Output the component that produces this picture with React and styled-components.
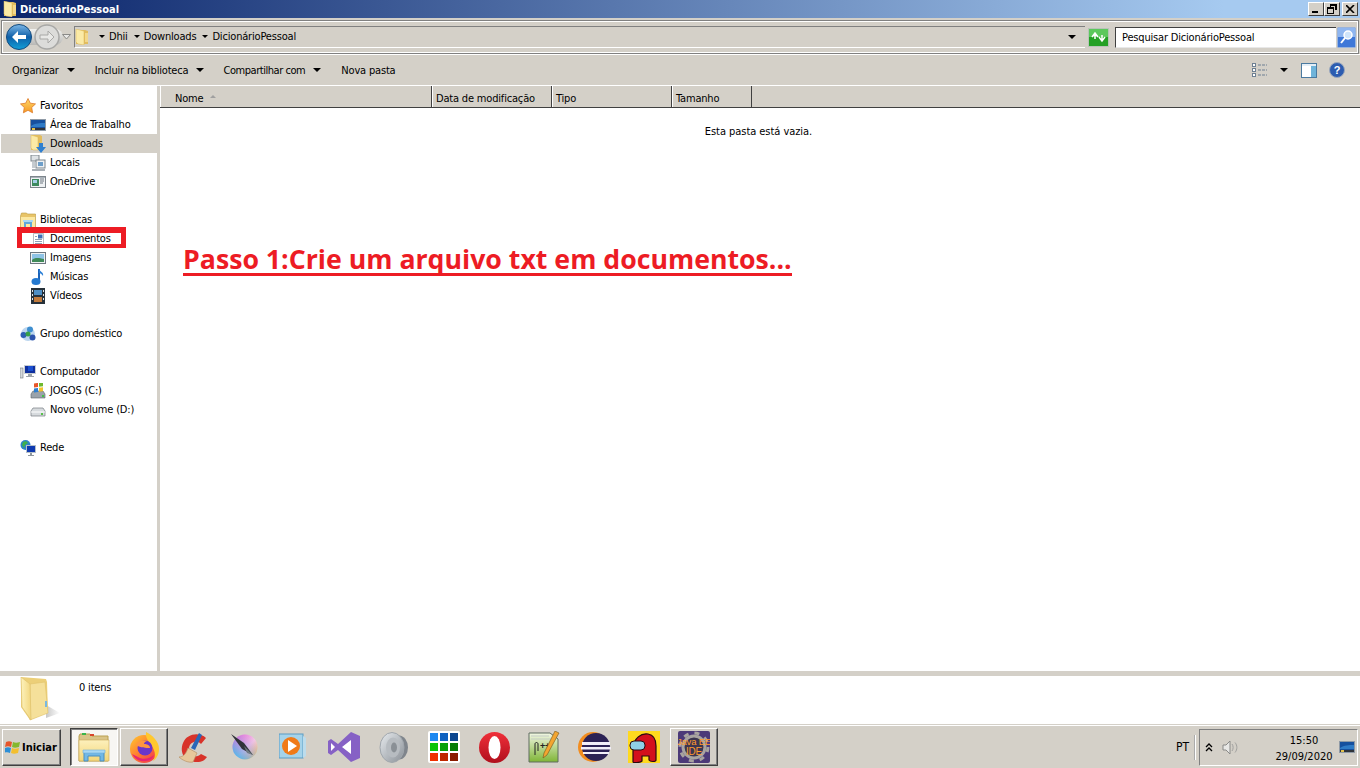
import React from 'react'
import styled, { createGlobalStyle } from 'styled-components'

const GlobalStyle = createGlobalStyle`
  html, body {
    margin: 0;
    padding: 0;
    background: #d4d0c8;
    overflow: hidden;
  }
  * {
    box-sizing: border-box;
  }
`

const Window = styled.div`
  position: relative;
  display: flex;
  flex-direction: column;
  width: 1360px;
  height: 768px;
  background: #d4d0c8;
  color: #000;
  font-family: 'DejaVu Sans', 'Liberation Sans', sans-serif;
  font-stretch: condensed;
  font-size: 11px;
  letter-spacing: -0.18px;
`

const TitleBar = styled.div`
  display: flex;
  align-items: center;
  height: 18px;
  padding: 0 2px 0 3px;
  background: linear-gradient(90deg, #0a246a 0%, #a6caf0 90%, #a6caf0 100%);
  color: #fff;
  font-weight: bold;
  letter-spacing: 0;
`

const TitleText = styled.span`
  margin-left: 1px;
  flex: 1;
`

const CaptionButton = styled.div`
  display: flex;
  align-items: center;
  justify-content: center;
  width: 16px;
  height: 14px;
  margin-left: ${p => (p.$gap ? '2px' : '0')};
  background: #d4d0c8;
  border: 1px solid;
  border-color: #fff #404040 #404040 #fff;
`

const AddressBar = styled.div`
  display: flex;
  align-items: center;
  height: 34px;
  margin: 2px 1px 0;
  padding: 0 2px 0 4px;
  border: 1px solid #808080;
  box-shadow: inset 0 0 0 1px #fff;
`

const NavGroup = styled.div`
  position: relative;
  display: flex;
  align-items: center;
  gap: 2px;
  width: 68px;
  height: 26px;
  flex-shrink: 0;

  &::before {
    content: '';
    position: absolute;
    left: 12px;
    top: 5px;
    width: 45px;
    height: 16px;
    border-radius: 8px;
    background: linear-gradient(#f2f2f0, #b8b8b6);
  }

  svg {
    position: relative;
  }
`

const AddressBox = styled.div`
  display: flex;
  align-items: center;
  flex: 1;
  height: 22px;
  padding-bottom: 1px;
  border-top: 1px solid #808080;
  border-left: 1px solid #808080;
  border-bottom: 1px solid #fff;
`

const Crumb = styled.span`
  display: inline-flex;
  align-items: center;
  gap: 4px;
  margin-left: ${p => (p.$first ? '8px' : '6px')};
`

const ArrowDown = styled.i`
  display: inline-block;
  width: 0;
  height: 0;
  border-style: solid;
  border-width: ${p => (p.$big ? '4px 4px 0' : '3px 3px 0')};
  border-color: #000 transparent transparent;
`

const BoxArrow = styled(ArrowDown)`
  margin-left: auto;
  margin-right: 9px;
`

const RefreshButton = styled.div`
  display: flex;
  margin: 0 6px 0 3px;
`

const SearchBox = styled.div`
  display: flex;
  align-items: center;
  width: 221px;
  height: 21px;
  padding-left: 6px;
  background: #fff;
  border-top: 1px solid #404040;
  border-left: 1px solid #404040;
  border-bottom: 1px solid #e8e8e8;
`

const SearchButton = styled.div`
  display: flex;
  margin-left: 1px;
`

const Toolbar = styled.div`
  display: flex;
  align-items: center;
  height: 31px;
  padding: 0 15px 0 12px;
  border-top: 1px solid #fff;
`

const ToolItem = styled.span`
  display: inline-flex;
  align-items: center;
  gap: 8px;
  margin-right: ${p => p.$gap || 20}px;
  letter-spacing: ${p => (p.$tight ? '-0.45px' : 'inherit')};
`

const ToolIcons = styled.div`
  display: flex;
  align-items: center;
  margin-left: auto;
`

const ToolIcon = styled.span`
  display: flex;
  align-items: center;
  margin-left: ${p => p.$gap || 0}px;
`

const Main = styled.div`
  display: flex;
  flex: 1;
  min-height: 0;
  border-top: 1px solid #fff;
`

const Sidebar = styled.nav`
  width: 157px;
  flex-shrink: 0;
  padding-top: 10px;
  background: #fff;
`

const Group = styled.div`
  margin-bottom: 19px;
`

const Row = styled.div`
  display: flex;
  align-items: center;
  height: 19px;
  margin-left: 1px;
  padding-left: ${p => (p.$child ? '29px' : '19px')};
  gap: 4px;
  background: ${p => (p.$active ? '#d4d0c8' : 'transparent')};
`

const Content = styled.div`
  display: flex;
  flex-direction: column;
  flex: 1;
  margin-left: 3px;
  background: #fff;
`

const HeaderRow = styled.div`
  display: flex;
  height: 22px;
  flex-shrink: 0;
  background: #d4d0c8;
  border-bottom: 1px solid #404040;
`

const HeaderCell = styled.div`
  display: flex;
  align-items: center;
  gap: 7px;
  width: ${p => p.$w}px;
  padding-top: 3px;
  padding-left: ${p => p.$pad || 4}px;
  border-right: 1px solid #404040;
  box-shadow: inset 1px 0 0 #fff;
`

const SortArrow = styled.i`
  width: 0;
  height: 0;
  margin-top: -3px;
  border-style: solid;
  border-width: 0 3px 3px;
  border-color: transparent transparent #a0a0a0;
`

const Empty = styled.div`
  margin-top: 17px;
  margin-right: 3px;
  text-align: center;
  line-height: 14px;
  letter-spacing: -0.05px;
`

const StatusBar = styled.div`
  display: flex;
  height: 48px;
  flex-shrink: 0;
  margin-top: 5px;
  padding: 1px 0 0 20px;
  background: #fff;
`

const StatusText = styled.span`
  margin: 4px 0 0 17px;
`

const Taskbar = styled.div`
  display: flex;
  align-items: center;
  height: 43px;
  flex-shrink: 0;
  margin-top: 1px;
  padding-left: 2px;
  border-top: 1px solid #fff;
`

const StartButton = styled.div`
  display: flex;
  align-items: center;
  gap: 1px;
  width: 59px;
  height: 37px;
  margin-right: 8px;
  padding-left: 2px;
  font-family: 'DejaVu Sans', 'Liberation Sans', sans-serif;
  font-weight: bold;
  letter-spacing: 0;
  border: 1px solid;
  border-color: #fff #404040 #404040 #fff;
  box-shadow: inset -1px -1px 0 #808080;
`

const TaskButton = styled.div`
  display: flex;
  align-items: center;
  justify-content: center;
  width: 50px;
  height: 38px;
  flex-shrink: 0;
`

const RaisedTask = styled(TaskButton)`
  width: 48px;
  margin: 0 1px;
  border: 1px solid;
  border-color: ${p =>
    p.$pressed ? '#404040 #fff #fff #404040' : '#fff #404040 #404040 #fff'};
  background: ${p => (p.$pressed ? '#f7f6f3' : 'transparent')};
  box-shadow: ${p =>
    p.$pressed ? 'inset 1px 1px 0 #808080' : 'inset -1px -1px 0 #808080'};
`

const Tray = styled.div`
  display: flex;
  align-items: center;
  margin-left: auto;
`

const Lang = styled.span`
  font-size: 12px;
  letter-spacing: 0;
  padding-right: 5px;
  margin-right: 2px;
  height: 25px;
  line-height: 25px;
  border-right: 2px groove #fff;
`

const TrayBox = styled.div`
  display: flex;
  align-items: center;
  width: 159px;
  height: 37px;
  margin: 0 2px 0 1px;
  padding-left: 5px;
  border: 1px solid;
  border-color: #808080 #fff #fff #808080;
`

const TraySound = styled.span`
  display: flex;
  margin-left: 9px;
`

const Clock = styled.div`
  width: 66px;
  margin: 0 2px 0 32px;
  padding-top: 3px;
  text-align: center;
  line-height: 16px;
  letter-spacing: 0;
`

const Annotation = styled.div`
  position: absolute;
  left: 183px;
  top: 240px;
  height: 36px;
  color: #ed1c24;
  font-family: 'Open Sans', 'Liberation Sans', sans-serif;
  font-stretch: normal;
  font-weight: 700;
  font-size: 26.7px;
  line-height: 37px;
  letter-spacing: 0;
  white-space: nowrap;
  border-bottom: 3px solid #ed1c24;
`

const Highlight = styled.div`
  position: absolute;
  left: 17px;
  top: 227px;
  width: 109px;
  height: 21px;
  border: solid #ed1c24;
  border-width: 6px 5px 4px;
`

const Folder = ({ size = 16 }) => (
  <svg width={size} height={size} viewBox="0 0 16 16">
    <path d="M1 1h9l3 1v13H1z" fill="#e2bd5f" />
    <path d="M1 0l8 2v14l-6-1-2-2z" fill="#fbeaa6" stroke="#d9b557" strokeWidth=".5" />
    <path d="M10 4h3v9h-3z" fill="#f3d78a" />
  </svg>
)

const FolderDown = () => (
  <svg width="16" height="18" viewBox="0 0 16 18">
    <path d="M1 0h9l2 1v14H1z" fill="#e2bd5f" />
    <path d="M1 0l7 2v13l-5 0-2-2z" fill="#fbeaa6" stroke="#d9b557" strokeWidth=".5" />
    <path d="M9 8h4v4h3l-5 6-5-6h3z" fill="#2f7fd0" />
  </svg>
)

const Star = () => (
  <svg width="16" height="16" viewBox="0 0 16 16">
    <defs>
      <linearGradient id="st" x1="0" x2="0" y1="0" y2="1">
        <stop offset="0" stopColor="#ffd76a" />
        <stop offset="1" stopColor="#f59a23" />
      </linearGradient>
    </defs>
    <path d="M8 .500l2.300 4.700 5.200.7-3.800 3.600.9 5.300L8 12.300l-4.600 2.500.9-5.300L.500 5.900l5.200-.7z" fill="url(#st)" stroke="#dd7a28" strokeWidth=".8" />
  </svg>
)

const Desktop = () => (
  <svg width="16" height="16" viewBox="0 0 16 16">
    <rect x="0" y="2" width="16" height="12" fill="#8f9aa6" />
    <rect x="1" y="3" width="14" height="10" fill="#16509e" />
    <path d="M1 9c4-3 9-3 14-3v4H1z" fill="#2f7bc6" />
    <rect x="1" y="11" width="14" height="2" fill="#30343a" />
    <rect x="2" y="11" width="3" height="2" fill="#e2c04a" />
  </svg>
)

const Locais = () => (
  <svg width="16" height="16" viewBox="0 0 16 16">
    <rect x="1" y="0" width="8" height="6" fill="#dfe3e6" stroke="#7d858c" />
    <rect x="6" y="5" width="9" height="8" fill="#eef1f3" stroke="#7d858c" />
    <rect x="8" y="7" width="5" height="4" fill="#6d9ec9" />
    <path d="M2 14h13v2H2z" fill="#a9b0b6" />
    <path d="M2 7h3v6H2z" fill="#c5cbd0" />
  </svg>
)

const WindowIcon = () => (
  <svg width="16" height="16" viewBox="0 0 16 16">
    <rect x=".5" y="2.500" width="15" height="11" fill="#eef1f3" stroke="#7d858c" />
    <rect x="2" y="5" width="7" height="7" fill="#3d8a5e" />
    <path d="M3 6h4v3H3z" fill="#a5cfe8" />
    <path d="M10 5h4M10 7h4M10 9h3" stroke="#6d7780" />
    <path d="M1 3h14v1H1z" fill="#aab2b9" />
  </svg>
)

const Library = () => (
  <svg width="16" height="16" viewBox="0 0 16 16">
    <path d="M.5 4l1-3h5l1 1h8v13H.5z" fill="#e8c468" stroke="#b99a45" strokeWidth=".6" />
    <path d="M1 5h14v10H1z" fill="#fbe8a2" />
    <path d="M4 15v-5h8v5h-2v-3H6v3z" fill="#5fa7d9" />
    <path d="M3 8h10v2H3z" fill="#a9d8f4" />
  </svg>
)

const Doc = () => (
  <svg width="16" height="16" viewBox="0 0 16 16">
    <path d="M3.500 2.500h10v12h-10z" fill="#fff" stroke="#b7bdc4" />
    <path d="M8 3.500h4.500v4H8z" fill="#3e6fb5" />
    <path d="M5 5.500h2M5 8.500h7M5 10.500h7M5 12.500h7" stroke="#8ea0b5" />
  </svg>
)

const Picture = () => (
  <svg width="16" height="16" viewBox="0 0 16 16">
    <rect x=".5" y="2.500" width="15" height="11" fill="#eef1f3" stroke="#6d7780" />
    <rect x="2" y="4" width="12" height="8" fill="#8ec3e6" />
    <path d="M2 10c3-3 7-2 12-1v3H2z" fill="#3f8a58" />
  </svg>
)

const Note = () => (
  <svg width="16" height="18" viewBox="0 0 16 18">
    <path d="M9 1v11.500" stroke="#1c63b8" strokeWidth="2" />
    <ellipse cx="6" cy="13.500" rx="4.500" ry="3.500" fill="#2479d0" />
    <path d="M9 1c1 3 5 3 4 7-1-2-3-3-4-3z" fill="#2a7fd6" />
  </svg>
)

const Film = () => (
  <svg width="16" height="16" viewBox="0 0 16 16">
    <rect x="1" y="0" width="14" height="16" fill="#26313a" />
    <rect x="4" y="2" width="8" height="5" fill="#4d8ec4" />
    <rect x="4" y="9" width="8" height="5" fill="#c07a3c" />
    <path d="M2 2h1v2H2zM2 6h1v2H2zM2 10h1v2H2zM13 2h1v2h-1zM13 6h1v2h-1zM13 10h1v2h-1z" fill="#dfe6ea" />
  </svg>
)

const Homegroup = () => (
  <svg width="16" height="16" viewBox="0 0 16 16">
    <circle cx="8" cy="8" r="7" fill="#bcd6ef" />
    <circle cx="3.500" cy="9" r="3" fill="#2c5fb3" />
    <circle cx="10" cy="3.500" r="3" fill="#3f8fd0" />
    <circle cx="12.500" cy="11.500" r="3" fill="#2d55ad" />
    <circle cx="8" cy="8" r="2.500" fill="#35a04a" />
  </svg>
)

const Computer = () => (
  <svg width="16" height="16" viewBox="0 0 16 16">
    <rect x="0" y="4" width="3" height="10" fill="#d5d9dc" stroke="#70777d" strokeWidth=".6" />
    <rect x="4" y="1" width="12" height="9" fill="#c8ced3" />
    <rect x="5" y="2" width="10" height="7" fill="#0e2f9e" />
    <path d="M8 2h5v5H8z" fill="#1a4fd0" />
    <path d="M8 10h4v2h2v1H6v-1h2z" fill="#9ca3a9" />
  </svg>
)

const DriveC = () => (
  <svg width="16" height="16" viewBox="0 0 16 16">
    <path d="M1 11l2-3h10l2 3v4H1z" fill="#9aa3aa" stroke="#5c646a" strokeWidth=".6" />
    <rect x="12" y="12" width="2" height="2" fill="#45c04a" />
    <rect x="4" y="1" width="4" height="4" fill="#e8562a" transform="skewY(-8)" />
    <rect x="9" y="1" width="4" height="4" fill="#6fb92f" transform="skewY(-8)" />
    <rect x="4" y="6" width="4" height="4" fill="#2f80d0" transform="skewY(-8)" />
    <rect x="9" y="6" width="4" height="4" fill="#f2c12e" transform="skewY(-8)" />
  </svg>
)

const DriveD = () => (
  <svg width="16" height="16" viewBox="0 0 16 16">
    <path d="M1 9l2-3h10l2 3v5H1z" fill="#d7dbde" stroke="#767d83" strokeWidth=".7" />
    <path d="M1 10h14" stroke="#fff" />
    <rect x="11" y="11" width="2" height="2" fill="#58c04a" />
  </svg>
)

const Network = () => (
  <svg width="16" height="16" viewBox="0 0 16 16">
    <circle cx="5.500" cy="5" r="5" fill="#2c82c9" />
    <path d="M3 2l3-1 2 2-3 2-1 3-2-3z" fill="#3fb04a" />
    <rect x="6" y="5" width="10" height="8" fill="#b6c0c8" />
    <rect x="7" y="6" width="8" height="6" fill="#0e39b0" />
    <path d="M10 13h2v2h2v1H8v-1h2z" fill="#8f979d" />
  </svg>
)

const StartFlag = () => (
  <svg width="16" height="16" viewBox="0 0 16 16">
    <path d="M1 3c2-1 4-1 6 0l-1 5c-2-1-4-1-6 0z" fill="#e6552b" />
    <path d="M8 3c2 1 4 1 7 0l-1 5c-3 1-5 1-7 0z" fill="#84b82e" />
    <path d="M0 9c2-1 4-1 6 0l-1 5c-2-1-4-1-6 0z" fill="#2c8ed6" />
    <path d="M7 9c2 1 4 1 7 0l-1 5c-3 1-5 1-7 0z" fill="#f3bf2f" />
  </svg>
)

const ExplorerIcon = () => (
  <svg width="32" height="30" viewBox="0 0 32 30">
    <defs>
      <linearGradient id="ex" x1="0" x2="0" y1="0" y2="1">
        <stop offset="0" stopColor="#fdf0bc" />
        <stop offset="1" stopColor="#f3d679" />
      </linearGradient>
    </defs>
    <path d="M1 4l1-2h10l2 2h16v25H1z" fill="#d9c488" stroke="#b9a050" />
    <rect x="4" y="1" width="4" height="2" fill="#39b54a" />
    <rect x="12" y="2" width="4" height="2" fill="#d8452c" />
    <path d="M1 8h30v21H1z" fill="url(#ex)" stroke="#c9aa58" strokeWidth=".6" />
    <path d="M6 29v-9h20v9h-4v-5H10v5z" fill="#72b8e6" stroke="#4a8fc0" />
    <path d="M5 18h22v3H5z" fill="#a9d8f4" stroke="#6fb0dc" strokeWidth=".6" />
  </svg>
)

const Firefox = () => (
  <svg width="31" height="31" viewBox="0 0 31 31">
    <defs>
      <linearGradient id="ff" x1="0" x2="1" y1="0" y2="1">
        <stop offset="0" stopColor="#ffcb30" />
        <stop offset=".5" stopColor="#ff7a2f" />
        <stop offset="1" stopColor="#ee2d56" />
      </linearGradient>
    </defs>
    <circle cx="15" cy="17" r="14" fill="url(#ff)" />
    <path d="M17 0c6 3 13 9 13 17 0 6-3 10-6 12 3-5 2-9 0-13-2-5-8-8-7-16z" fill="#ffc82e" />
    <circle cx="16" cy="16" r="7.500" fill="#6b36c9" />
    <path d="M7 13c3-5 9-5 12-4-3 0-4 2-4 3 3 0 6 1 6 4-4 0-9 0-14-3z" fill="#ff9640" />
    <path d="M3 22c3 6 9 8 14 7 4 0 7-3 8-6-4 4-12 5-16 2-2-1-4-2-6-3z" fill="#e8256f" />
  </svg>
)

const CCleaner = () => (
  <svg width="32" height="32" viewBox="0 0 32 32">
    <path d="M28 7C22 1 9 2 5 12s2 19 14 19c5 0 8-2 10-5l-6-3c-4 4-12 3-12-5 0-8 9-9 12-5z" fill="#d8332a" />
    <path d="M21 2l3 2-7 15-4-2z" fill="#2a67b8" />
    <path d="M10 17l9 5-4 9c-5 1-11-2-14-5 4 0 7-3 9-9z" fill="#e7c89a" stroke="#b99468" strokeWidth=".7" />
  </svg>
)

const Krita = () => (
  <svg width="28" height="28" viewBox="0 0 28 28">
    <defs>
      <linearGradient id="kr1" x1="0" x2="1" y1="0" y2="1">
        <stop offset="0" stopColor="#f05ad8" />
        <stop offset=".55" stopColor="#f9d8e8" />
        <stop offset="1" stopColor="#e8e23a" />
      </linearGradient>
      <linearGradient id="kr2" x1="1" x2="0" y1="0" y2="1">
        <stop offset="0" stopColor="#f05ad8" stopOpacity="0" />
        <stop offset="1" stopColor="#22c0ea" />
      </linearGradient>
    </defs>
    <circle cx="15" cy="14" r="12.500" fill="url(#kr1)" />
    <circle cx="15" cy="14" r="12.500" fill="url(#kr2)" />
    <path d="M1 1l13 9 9 12-11-6z" fill="#30323a" />
    <path d="M14 13l9 9-6-2z" fill="#6f7a82" />
  </svg>
)

const Wmp = () => (
  <svg width="30" height="28" viewBox="0 0 30 28">
    <rect x="0" y="1" width="24" height="24" fill="#a5d3ea" stroke="#5a9cc4" />
    <path d="M24 3l3 2v18l-3 2z" fill="#bcdcec" />
    <circle cx="12" cy="13" r="9" fill="#f07a18" />
    <path d="M9 7l9 6-9 6z" fill="#fff" />
  </svg>
)

const VisualStudio = () => (
  <svg width="32" height="32" viewBox="0 0 32 32">
    <path d="M23 1l9 4v22l-9 4L10 19l-7 5-3-2V10l3-2 7 5z" fill="#8661c5" />
    <path d="M23 9v14l-9-7zM3 12v8l4-4z" fill="#fff" />
  </svg>
)

const SpeakerApp = () => (
  <svg width="30" height="31" viewBox="0 0 30 31">
    <defs>
      <linearGradient id="sp" x1="0" x2="1" y1="0" y2="1">
        <stop offset="0" stopColor="#e8ecef" />
        <stop offset="1" stopColor="#8a9097" />
      </linearGradient>
    </defs>
    <ellipse cx="20" cy="15.500" rx="9" ry="12" fill="#7f858c" />
    <ellipse cx="13" cy="15.500" rx="12" ry="15" fill="url(#sp)" stroke="#a0a6ac" />
    <ellipse cx="14" cy="15.500" rx="7" ry="10" fill="#b7bcc1" />
    <ellipse cx="15" cy="15.500" rx="3" ry="5" fill="#8a9096" />
  </svg>
)

const GridApp = () => {
  const colors = ['#1e88f0', '#0f62c0', '#0b4690', '#0ac40a', '#08a008', '#067d06', '#f03000', '#c02800', '#8a1c00']
  return (
    <svg width="32" height="32" viewBox="0 0 32 32">
      <rect width="32" height="32" rx="2" fill="#fff" />
      {colors.map((c, i) => (
        <rect key={c} x={2 + (i % 3) * 10} y={2 + Math.floor(i / 3) * 10} width="8" height="8" fill={c} />
      ))}
    </svg>
  )
}

const Opera = () => (
  <svg width="31" height="31" viewBox="0 0 31 31">
    <defs>
      <linearGradient id="op" x1="0" x2="0" y1="0" y2="1">
        <stop offset="0" stopColor="#f0303a" />
        <stop offset="1" stopColor="#b00f1c" />
      </linearGradient>
    </defs>
    <circle cx="15.500" cy="15.500" r="15.500" fill="url(#op)" />
    <ellipse cx="15.500" cy="15.500" rx="6" ry="11.500" fill="#fff" />
  </svg>
)

const NotepadPP = () => (
  <svg width="32" height="32" viewBox="0 0 32 32">
    <defs>
      <linearGradient id="np" x1="0" x2="0" y1="0" y2="1">
        <stop offset="0" stopColor="#f2f7e4" />
        <stop offset="1" stopColor="#7fb536" />
      </linearGradient>
    </defs>
    <path d="M1 2h21l8 6v23H1z" fill="url(#np)" stroke="#5f6d60" />
    <path d="M3 5h18M3 8h24" stroke="#c5ccc5" />
    <text x="12" y="18" fontFamily="Liberation Sans" fontSize="9" fontWeight="700" fill="#222">++</text>
    <path d="M7 24V13c0-2 3-2 3 0v7" fill="none" stroke="#222" />
    <path d="M27 0l4 2-12 22-4 3 1-5z" fill="#f3a530" stroke="#73561a" strokeWidth=".6" />
  </svg>
)

const Eclipse = () => (
  <svg width="33" height="30" viewBox="0 0 33 30">
    <circle cx="15" cy="15" r="15" fill="#f28d1f" />
    <circle cx="18" cy="15" r="14" fill="#2c2255" />
    <path d="M4 10h28v3H4zM3 15h30v2.500H3zM5 20h26v2H5z" fill="#f1eef8" />
  </svg>
)

const AmongUs = () => (
  <svg width="32" height="32" viewBox="0 0 32 32">
    <rect width="32" height="32" fill="#ffd91e" />
    <path d="M5 31V17C6 7 13 2 20 3c6 1 8 6 8 12v14c0 2-6 2-7 0v-4h-7v5c-2 2-9 2-9 1z" fill="#d3101c" stroke="#2a0a10" strokeWidth="1.200" />
    <rect x="2" y="10" width="15" height="9" rx="4" fill="#8fd0e8" stroke="#2a0a10" />
  </svg>
)

const JavaEE = () => (
  <svg width="32" height="32" viewBox="0 0 32 32">
    <rect width="32" height="32" rx="2" fill="#4c3a78" />
    <circle cx="16" cy="16" r="11" fill="#3c3650" stroke="#a8a4a0" strokeWidth="3" />
    <circle cx="16" cy="16" r="14" fill="none" stroke="#a8a4a0" strokeWidth="3" strokeDasharray="5 6" />
    <text x="16" y="14" textAnchor="middle" fontFamily="Liberation Sans" fontSize="9.500" fill="#ff9a2e">Java EE</text>
    <text x="16" y="24" textAnchor="middle" fontFamily="Liberation Sans" fontSize="10" fill="#ff9a2e">IDE</text>
  </svg>
)

const BackButton = () => (
  <svg width="26" height="26" viewBox="0 0 26 26">
    <defs>
      <linearGradient id="bk" x1="0" x2="0" y1="0" y2="1">
        <stop offset="0" stopColor="#7db8e8" />
        <stop offset=".5" stopColor="#0f5fa8" />
        <stop offset="1" stopColor="#12a0d8" />
      </linearGradient>
    </defs>
    <circle cx="13" cy="13" r="12.500" fill="url(#bk)" stroke="#134a7d" />
    <path d="M6 13l6-6v4h8v4h-8v4z" fill="#fff" />
  </svg>
)

const ForwardButton = () => (
  <svg width="26" height="26" viewBox="0 0 26 26">
    <circle cx="13" cy="13" r="12" fill="#dcdcda" stroke="#a8a8a6" strokeWidth="1.500" />
    <path d="M20 13l-6-6v4H6v4h8v4z" fill="#e8e8e6" stroke="#a8a8a6" />
  </svg>
)

const HistoryArrow = () => (
  <svg width="9" height="6" viewBox="0 0 9 6">
    <path d="M.5.500h8L4.500 5z" fill="#e8e8e6" stroke="#8a8a88" />
  </svg>
)

const Refresh = () => (
  <svg width="21" height="19" viewBox="0 0 21 19">
    <rect x=".5" y=".5" width="20" height="18" fill="#24a024" stroke="#b8c4b8" />
    <rect x="1" y="1" width="19" height="8" fill="#5cc85c" />
    <path d="M4 9l3-4 3 4M7 6v5M17 9l-3 4-3-4M14 12V7" stroke="#fff" strokeWidth="1.500" fill="none" />
  </svg>
)

const SearchGlass = () => (
  <svg width="19" height="21" viewBox="0 0 19 21">
    <rect x=".5" y=".5" width="18" height="20" rx="1" fill="#3f78d8" stroke="#9ab4dc" />
    <rect x="1" y="1" width="17" height="9" fill="#8fb6f0" />
    <circle cx="11" cy="8" r="4" fill="#cfe4fa" stroke="#fff" strokeWidth="1.500" />
    <path d="M8 11l-4 5" stroke="#fff" strokeWidth="2" />
  </svg>
)

const ViewIcon = () => (
  <svg width="16" height="14" viewBox="0 0 16 14">
    <rect x=".5" y=".5" width="3" height="3" fill="#fff" stroke="#6d7f92" />
    <rect x=".5" y="5.500" width="3" height="3" fill="#fff" stroke="#6d7f92" />
    <rect x=".5" y="10.500" width="3" height="3" fill="#fff" stroke="#6d7f92" />
    <path d="M6 2h9M6 7h9M6 12h9" stroke="#6d7f92" strokeDasharray="3 1" />
  </svg>
)

const PaneIcon = () => (
  <svg width="16" height="15" viewBox="0 0 16 15">
    <rect x=".5" y=".5" width="15" height="14" fill="#fff" stroke="#4a7aa0" />
    <rect x="10" y="1" width="5" height="13" fill="#6fb4da" />
    <path d="M1 1h14v2H1z" fill="#e4eef6" />
  </svg>
)

const HelpIcon = () => (
  <svg width="16" height="16" viewBox="0 0 16 16">
    <circle cx="8" cy="8" r="7.500" fill="#2c5cb0" stroke="#9aa7bc" />
    <text x="8" y="12" textAnchor="middle" fontFamily="Liberation Sans" fontSize="11" fontWeight="700" fill="#fff">?</text>
  </svg>
)

const BigFolder = () => (
  <svg width="42" height="44" viewBox="0 0 42 44">
    <defs>
      <linearGradient id="bf" x1="0" x2="1" y1="0" y2="0">
        <stop offset="0" stopColor="#fdf2bd" />
        <stop offset="1" stopColor="#f2d77f" />
      </linearGradient>
      <linearGradient id="bs" x1="0" x2="1" y1="0" y2="0">
        <stop offset="0" stopColor="#c8c8c8" />
        <stop offset="1" stopColor="#ffffff" />
      </linearGradient>
    </defs>
    <path d="M26 28l14 8-14 5z" fill="url(#bs)" />
    <path d="M1 0l25 2 1 3 1 30-4 2L10 43 1 30z" fill="#eccf78" />
    <path d="M10 7l15-2 3 31-18 7z" fill="#f5e09a" stroke="#e0c26c" strokeWidth=".6" />
    <path d="M1 0l9 7 1 36L2 30z" fill="url(#bf)" stroke="#dfc36f" strokeWidth=".7" />
    <path d="M25 24h2v6h-2z" fill="#7ab8e0" />
  </svg>
)

const TraySpeaker = () => (
  <svg width="17" height="17" viewBox="0 0 17 17">
    <path d="M1 6h3l4-4v13l-4-4H1z" fill="#e8e8e6" stroke="#8a8a88" />
    <path d="M10 5c1.500 2 1.500 5 0 7M13 3.500c2.500 3 2.500 7 0 10" fill="none" stroke="#a0a09e" />
  </svg>
)

const Chevrons = () => (
  <svg width="8" height="9" viewBox="0 0 8 9">
    <path d="M1 4l3-3 3 3M1 8l3-3 3 3" fill="none" stroke="#000" strokeWidth="1.300" />
  </svg>
)

const favorites = [
  { icon: <Desktop />, label: 'Área de Trabalho' },
  { icon: <FolderDown />, label: 'Downloads', active: true },
  { icon: <Locais />, label: 'Locais' },
  { icon: <WindowIcon />, label: 'OneDrive' },
]

const libraries = [
  { icon: <Doc />, label: 'Documentos' },
  { icon: <Picture />, label: 'Imagens' },
  { icon: <Note />, label: 'Músicas' },
  { icon: <Film />, label: 'Vídeos' },
]

const drives = [
  { icon: <DriveC />, label: 'JOGOS (C:)' },
  { icon: <DriveD />, label: 'Novo volume (D:)' },
]

const taskIcons = [
  <CCleaner key="cc" />,
  <Krita key="kr" />,
  <Wmp key="wmp" />,
  <VisualStudio key="vs" />,
  <SpeakerApp key="sp" />,
  <GridApp key="grid" />,
  <Opera key="op" />,
  <NotepadPP key="npp" />,
  <Eclipse key="ec" />,
  <AmongUs key="au" />,
]

const NavGroupRows = ({ head, icon, items = [] }) => (
  <Group>
    <Row>
      {icon}
      <span>{head}</span>
    </Row>
    {items.map(({ icon, label, active }) => (
      <Row $child $active={active} key={label}>
        {icon}
        <span>{label}</span>
      </Row>
    ))}
  </Group>
)

export default function App() {
  return (
    <Window>
      <GlobalStyle />
      <TitleBar>
        <Folder />
        <TitleText>DicionárioPessoal</TitleText>
        <CaptionButton>
          <svg width="8" height="8" viewBox="0 0 8 8"><path d="M0 6h6v2H0z" /></svg>
        </CaptionButton>
        <CaptionButton>
          <svg width="10" height="10" viewBox="0 0 10 10"><path d="M3 0h7v6H8V2H4v1H3zM0 3h7v7H0zM1 5v4h5V5z" fillRule="evenodd" /></svg>
        </CaptionButton>
        <CaptionButton $gap>
          <svg width="9" height="8" viewBox="0 0 9 8"><path d="M0 0l8 8M8 0L0 8" stroke="#000" strokeWidth="1.600" /></svg>
        </CaptionButton>
      </TitleBar>

      <AddressBar>
        <NavGroup>
          <BackButton />
          <ForwardButton />
          <HistoryArrow />
        </NavGroup>
        <AddressBox>
          <Folder />
          <Crumb $first><ArrowDown />Dhii</Crumb>
          <Crumb><ArrowDown />Downloads</Crumb>
          <Crumb><ArrowDown />DicionárioPessoal</Crumb>
          <BoxArrow $big />
        </AddressBox>
        <RefreshButton><Refresh /></RefreshButton>
        <SearchBox>Pesquisar DicionárioPessoal</SearchBox>
        <SearchButton><SearchGlass /></SearchButton>
      </AddressBar>

      <Toolbar>
        <ToolItem>Organizar <ArrowDown $big /></ToolItem>
        <ToolItem $gap={19}>Incluir na biblioteca <ArrowDown $big /></ToolItem>
        <ToolItem $tight>Compartilhar com <ArrowDown $big /></ToolItem>
        <ToolItem>Nova pasta</ToolItem>
        <ToolIcons>
          <ToolIcon><ViewIcon /></ToolIcon>
          <ToolIcon $gap={12}><ArrowDown $big /></ToolIcon>
          <ToolIcon $gap={13}><PaneIcon /></ToolIcon>
          <ToolIcon $gap={12}><HelpIcon /></ToolIcon>
        </ToolIcons>
      </Toolbar>

      <Main>
        <Sidebar>
          <NavGroupRows head="Favoritos" icon={<Star />} items={favorites} />
          <NavGroupRows head="Bibliotecas" icon={<Library />} items={libraries} />
          <NavGroupRows head="Grupo doméstico" icon={<Homegroup />} />
          <NavGroupRows head="Computador" icon={<Computer />} items={drives} />
          <NavGroupRows head="Rede" icon={<Network />} />
        </Sidebar>
        <Content>
          <HeaderRow>
            <HeaderCell $w={272} $pad={15}>Nome <SortArrow /></HeaderCell>
            <HeaderCell $w={120}>Data de modificação</HeaderCell>
            <HeaderCell $w={120}>Tipo</HeaderCell>
            <HeaderCell $w={80}>Tamanho</HeaderCell>
          </HeaderRow>
          <Empty>Esta pasta está vazia.</Empty>
        </Content>
      </Main>

      <StatusBar>
        <BigFolder />
        <StatusText>0 itens</StatusText>
      </StatusBar>

      <Taskbar>
        <StartButton><StartFlag />Iniciar</StartButton>
        <RaisedTask $pressed><ExplorerIcon /></RaisedTask>
        <RaisedTask><Firefox /></RaisedTask>
        {taskIcons.map(icon => (
          <TaskButton key={icon.key}>{icon}</TaskButton>
        ))}
        <RaisedTask><JavaEE /></RaisedTask>
        <Tray>
          <Lang>PT</Lang>
          <TrayBox>
            <Chevrons />
            <TraySound><TraySpeaker /></TraySound>
            <Clock>15:50<br />29/09/2020</Clock>
            <Desktop />
          </TrayBox>
        </Tray>
      </Taskbar>

      <Highlight />
      <Annotation>Passo 1:Crie um arquivo txt em documentos...</Annotation>
    </Window>
  )
}
